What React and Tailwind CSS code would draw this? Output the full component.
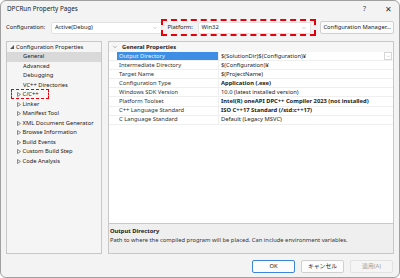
import { ChevronDown } from 'lucide-react';

const font = { fontFamily: '"Noto Sans", "Noto Sans CJK JP", sans-serif' };

const treeItems = [
  { label: 'General', indent: true, selected: true },
  { label: 'Advanced', indent: true },
  { label: 'Debugging', indent: true },
  { label: 'VC++ Directories', indent: true },
  { label: 'C/C++', arrow: true },
  { label: 'Linker', arrow: true },
  { label: 'Manifest Tool', arrow: true },
  { label: 'XML Document Generator', arrow: true },
  { label: 'Browse Information', arrow: true },
  { label: 'Build Events', arrow: true },
  { label: 'Custom Build Step', arrow: true },
  { label: 'Code Analysis', arrow: true },
];

const rows = [
  { name: 'Output Directory', value: '$(SolutionDir)$(Configuration)¥', selected: true },
  { name: 'Intermediate Directory', value: '$(Configuration)¥' },
  { name: 'Target Name', value: '$(ProjectName)' },
  { name: 'Configuration Type', value: 'Application (.exe)', bold: true },
  { name: 'Windows SDK Version', value: '10.0 (latest installed version)' },
  { name: 'Platform Toolset', value: 'Intel(R) oneAPI DPC++ Compiler 2023 (not installed)', bold: true },
  { name: 'C++ Language Standard', value: 'ISO C++17 Standard (/std:c++17)', bold: true },
  { name: 'C Language Standard', value: 'Default (Legacy MSVC)' },
];

const RightArrow = () => (
  <svg width="4" height="5" viewBox="0 0 4 5" className="shrink-0">
    <path d="M0.5 0.5 L3.5 2.5 L0.5 4.5 Z" fill="none" stroke="#707070" strokeWidth="0.8" />
  </svg>
);

const Dropdown = ({ text, className }) => (
  <div className={`flex items-center h-[12px] bg-white border border-[#e2e2e2] rounded-[2px] px-[3px] ${className}`}>
    <span className="flex-1 text-[5.8px] text-[#222]">{text}</span>
    <ChevronDown size={6} strokeWidth={1.5} className="text-[#888]" />
  </div>
);

const App = () => {
  return (
    <div style={font} className="w-[400px] h-[278px] bg-[#f3f3f3] border border-[#a0a0a0] rounded-[6px] overflow-hidden flex flex-col relative">
      {/* Title bar */}
      <div className="flex items-center h-[16px] pl-[6px] pr-[7px]">
        <span className="flex-1 text-[6.3px] text-[#222]">DPCRun Property Pages</span>
        <span className="text-[7px] text-[#444] mr-[19px]">?</span>
        <span className="text-[8px] text-[#333]">✕</span>
      </div>

      {/* Configuration row */}
      <div className="flex items-center h-[17px] mt-[2px] pl-[5px] pr-[5px]">
        <span className="text-[5.8px] text-[#222] w-[45px]">Configuration:</span>
        <Dropdown text="Active(Debug)" className="w-[111px]" />
        <div className="flex items-center h-[17px] w-[156px] ml-[-1px] border-2 border-dashed border-red-600 pl-[5px] pr-[3px]">
          <span className="text-[5.8px] text-[#222] w-[30px]">Platform:</span>
          <Dropdown text="Win32" className="flex-1" />
        </div>
        <div className="flex items-center justify-center h-[13px] w-[74px] ml-[4px] bg-[#fbfbfb] border border-[#d0d0d0] rounded-[2px]">
          <span className="text-[5.8px] text-[#222]">Configuration Manager...</span>
        </div>
      </div>

      {/* Main area */}
      <div className="flex mt-[5px] pl-[5px] pr-[5px] h-[213px] gap-[6px]">
        {/* Tree */}
        <div className="w-[96px] bg-[#f5f5f5] border border-[#c8c8c8] pt-[0.5px] relative">
          <div className="flex items-center h-[9.5px] pl-[3px] gap-[2px]">
            <svg width="4" height="4" viewBox="0 0 4 4" className="shrink-0">
              <path d="M4 0 L4 4 L0 4 Z" fill="#555" />
            </svg>
            <span className="text-[5.8px] text-[#222]">Configuration Properties</span>
          </div>
          {treeItems.map((item) => (
            <div
              key={item.label}
              className={`flex items-center h-[9.5px] gap-[1.5px] ${item.selected ? 'bg-[#d9d9d9]' : ''} ${item.arrow ? 'pl-[10px]' : 'pl-[16px]'}`}
            >
              {item.arrow && <RightArrow />}
              <span className="text-[5.8px] text-[#222]">{item.label}</span>
            </div>
          ))}
          {/* Annotation box */}
          <div className="absolute left-[4px] top-[47px] w-[38px] h-[10px] border-[1.5px] border-dashed border-red-600" />
        </div>

        {/* Right column */}
        <div className="flex-1 flex flex-col">
          <div className="flex-1 bg-white border border-[#c8c8c8] border-b-0">
            <div className="flex items-center h-[10px] bg-[#f6f6f6] pl-[3px] gap-[4px]">
              <ChevronDown size={6} strokeWidth={1.6} className="text-[#555]" />
              <span className="text-[5.8px] font-bold text-[#222]">General Properties</span>
            </div>
            {rows.map((row) => (
              <div key={row.name} className="flex h-[9.1px] border-b border-[#efefef]">
                <div className={`w-[101px] ml-[8px] flex items-center pl-[2px] ${row.selected ? 'bg-[#3d8ee4]' : ''}`}>
                  <span className={`text-[5.8px] ${row.selected ? 'text-[#eaf4ff]' : 'text-[#333]'}`}>{row.name}</span>
                </div>
                <div className="flex-1 flex items-center pl-[2px] border-l border-[#efefef]">
                  <span className={`flex-1 text-[5.8px] text-[#222] whitespace-nowrap ${row.bold ? 'font-bold' : ''}`}>{row.value}</span>
                  {row.selected && (
                    <div className="flex items-center justify-center w-[8px] h-[8px] mr-[1px] border border-[#d6d6d6] bg-white">
                      <ChevronDown size={5} strokeWidth={1.5} className="text-[#888]" />
                    </div>
                  )}
                </div>
              </div>
            ))}
          </div>
          <div className="h-[31px] bg-[#efefef] border border-[#c8c8c8] pl-[1px] pt-[3px]">
            <div className="text-[5.8px] font-bold text-[#222] leading-[9px]">Output Directory</div>
            <div className="text-[5.8px] text-[#333] leading-[9px]">Path to where the compiled program will be placed. Can include environment variables.</div>
          </div>
        </div>
      </div>

      {/* Buttons */}
      <div className="flex justify-end items-center gap-[6px] mt-[6px] pr-[6px]">
        <div className="flex items-center justify-center w-[43px] h-[13px] bg-[#fcfcfc] border border-[#3b84d8] rounded-[2px]">
          <span className="text-[5.8px] text-[#222]">OK</span>
        </div>
        <div className="flex items-center justify-center w-[43px] h-[13px] bg-[#fcfcfc] border border-[#d0d0d0] rounded-[2px]">
          <span className="text-[5.8px] text-[#222]">キャンセル</span>
        </div>
        <div className="flex items-center justify-center w-[43px] h-[13px] bg-[#f5f5f5] border border-[#e2e2e2] rounded-[2px]">
          <span className="text-[5.8px] text-[#a0a0a0]">適用(A)</span>
        </div>
      </div>
    </div>
  );
};

export default App;
